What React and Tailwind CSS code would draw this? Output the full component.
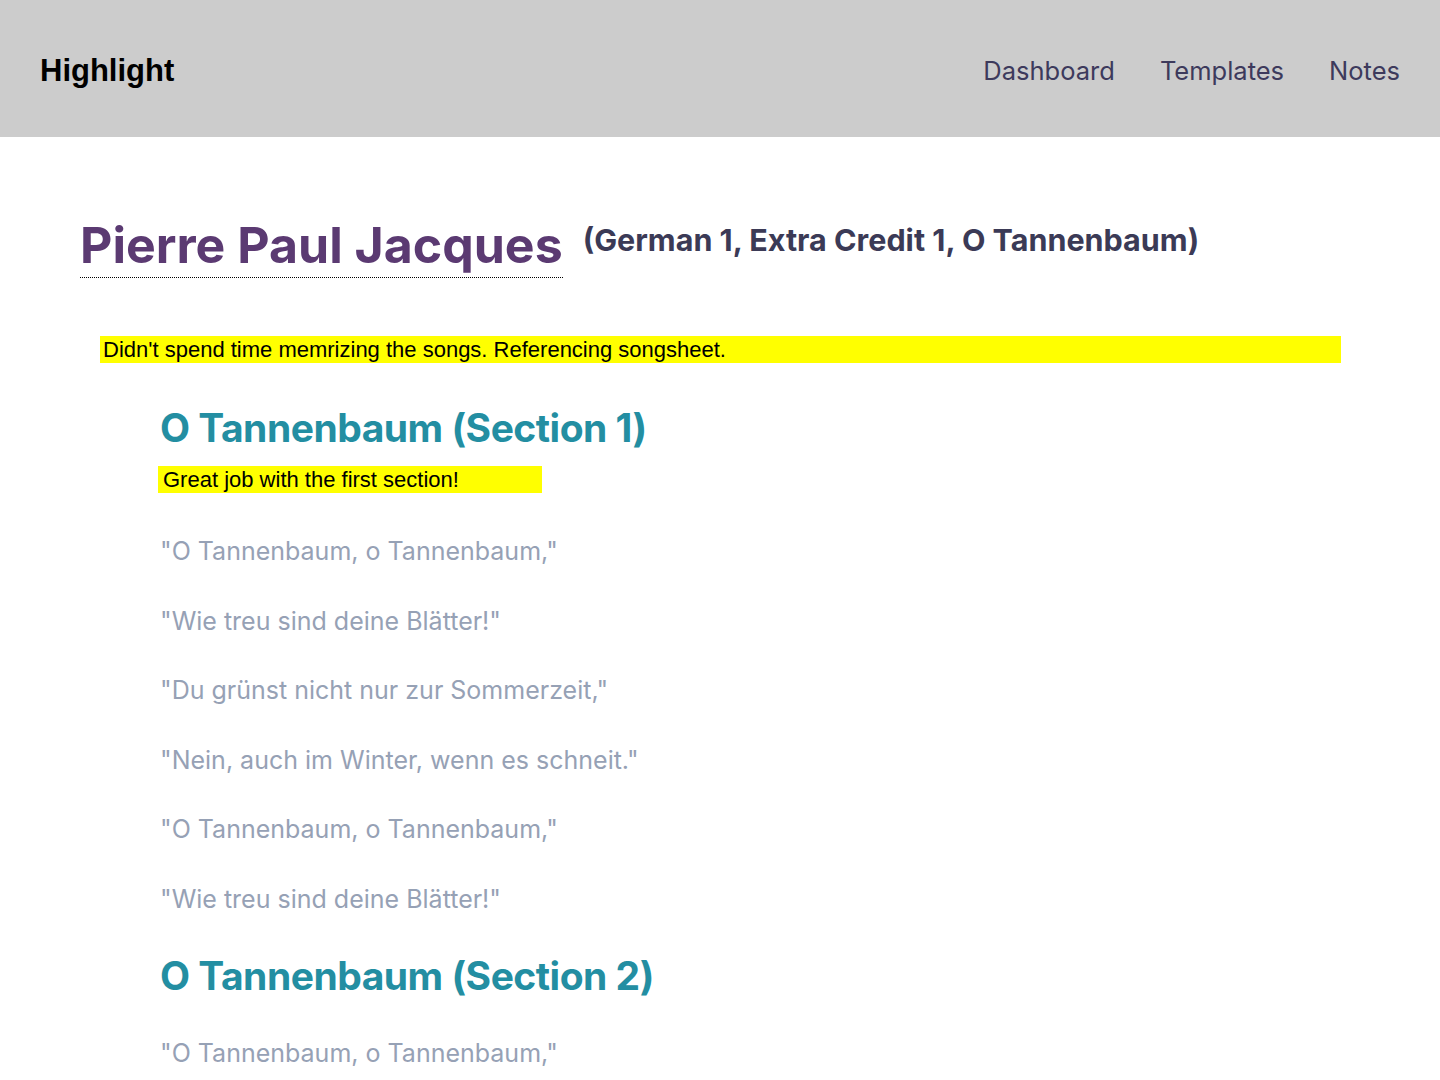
import React from 'react';

const lyrics = [
  '"O Tannenbaum, o Tannenbaum,"',
  '"Wie treu sind deine Blätter!"',
  '"Du grünst nicht nur zur Sommerzeit,"',
  '"Nein, auch im Winter, wenn es schneit."',
  '"O Tannenbaum, o Tannenbaum,"',
  '"Wie treu sind deine Blätter!"',
];

const Lyric = ({ text }) => (
  <p className="h-[69.5px] flex items-center text-[25px] text-[#96a1b5] font-['Inter',sans-serif]">{text}</p>
);

const App = () => {
  return (
    <div className="min-h-screen bg-white font-['Inter',sans-serif]">
      <header className="h-[137px] bg-[#cccccc] flex items-center justify-between px-10 pt-[6px]">
        <div className="text-[31px] font-bold text-black font-['Liberation_Sans',sans-serif]">Highlight</div>
        <nav className="flex gap-[45px] text-[25.5px] text-[#3d3a5c]">
          <a href="#">Dashboard</a>
          <a href="#">Templates</a>
          <a href="#">Notes</a>
        </nav>
      </header>

      <main className="px-20 pt-[78px]">
        <div className="flex items-start gap-5">
          <h1 className="text-[50px] leading-[60px] font-bold text-[#5b3a72] border-b border-dotted border-black pb-[2px]">
            Pierre Paul Jacques
          </h1>
          <h2 className="text-[30.5px] leading-[40px] font-bold text-[#3b3a56] mt-[5px]">
            (German 1, Extra Credit 1, O Tannenbaum)
          </h2>
        </div>

        <div className="mt-[58px] ml-5 w-[1241px] h-[27px] bg-[#ffff00] flex items-center pl-[3px] text-[22px] text-black font-['Liberation_Sans',sans-serif]">
          Didn't spend time memrizing the songs. Referencing songsheet.
        </div>

        <section className="pl-20 mt-[41px]">
          <h3 className="text-[39px] leading-[48px] font-bold text-[#238ea2] tracking-[-0.5px]">O Tannenbaum (Section 1)</h3>
          <div className="mt-[14px] ml-[-2px] w-[384px] h-[27px] bg-[#ffff00] flex items-center pl-[5px] text-[22px] text-black font-['Liberation_Sans',sans-serif]">
            Great job with the first section!
          </div>
          <div className="mt-[24px]">
            {lyrics.map((l, i) => (
              <Lyric key={i} text={l} />
            ))}
          </div>

          <h3 className="mt-[18px] text-[39px] leading-[48px] font-bold text-[#238ea2] tracking-[-0.5px]">O Tannenbaum (Section 2)</h3>
          <div className="mt-[19px]">
            <Lyric text={lyrics[0]} />
          </div>
        </section>
      </main>
    </div>
  );
};

export default App;
